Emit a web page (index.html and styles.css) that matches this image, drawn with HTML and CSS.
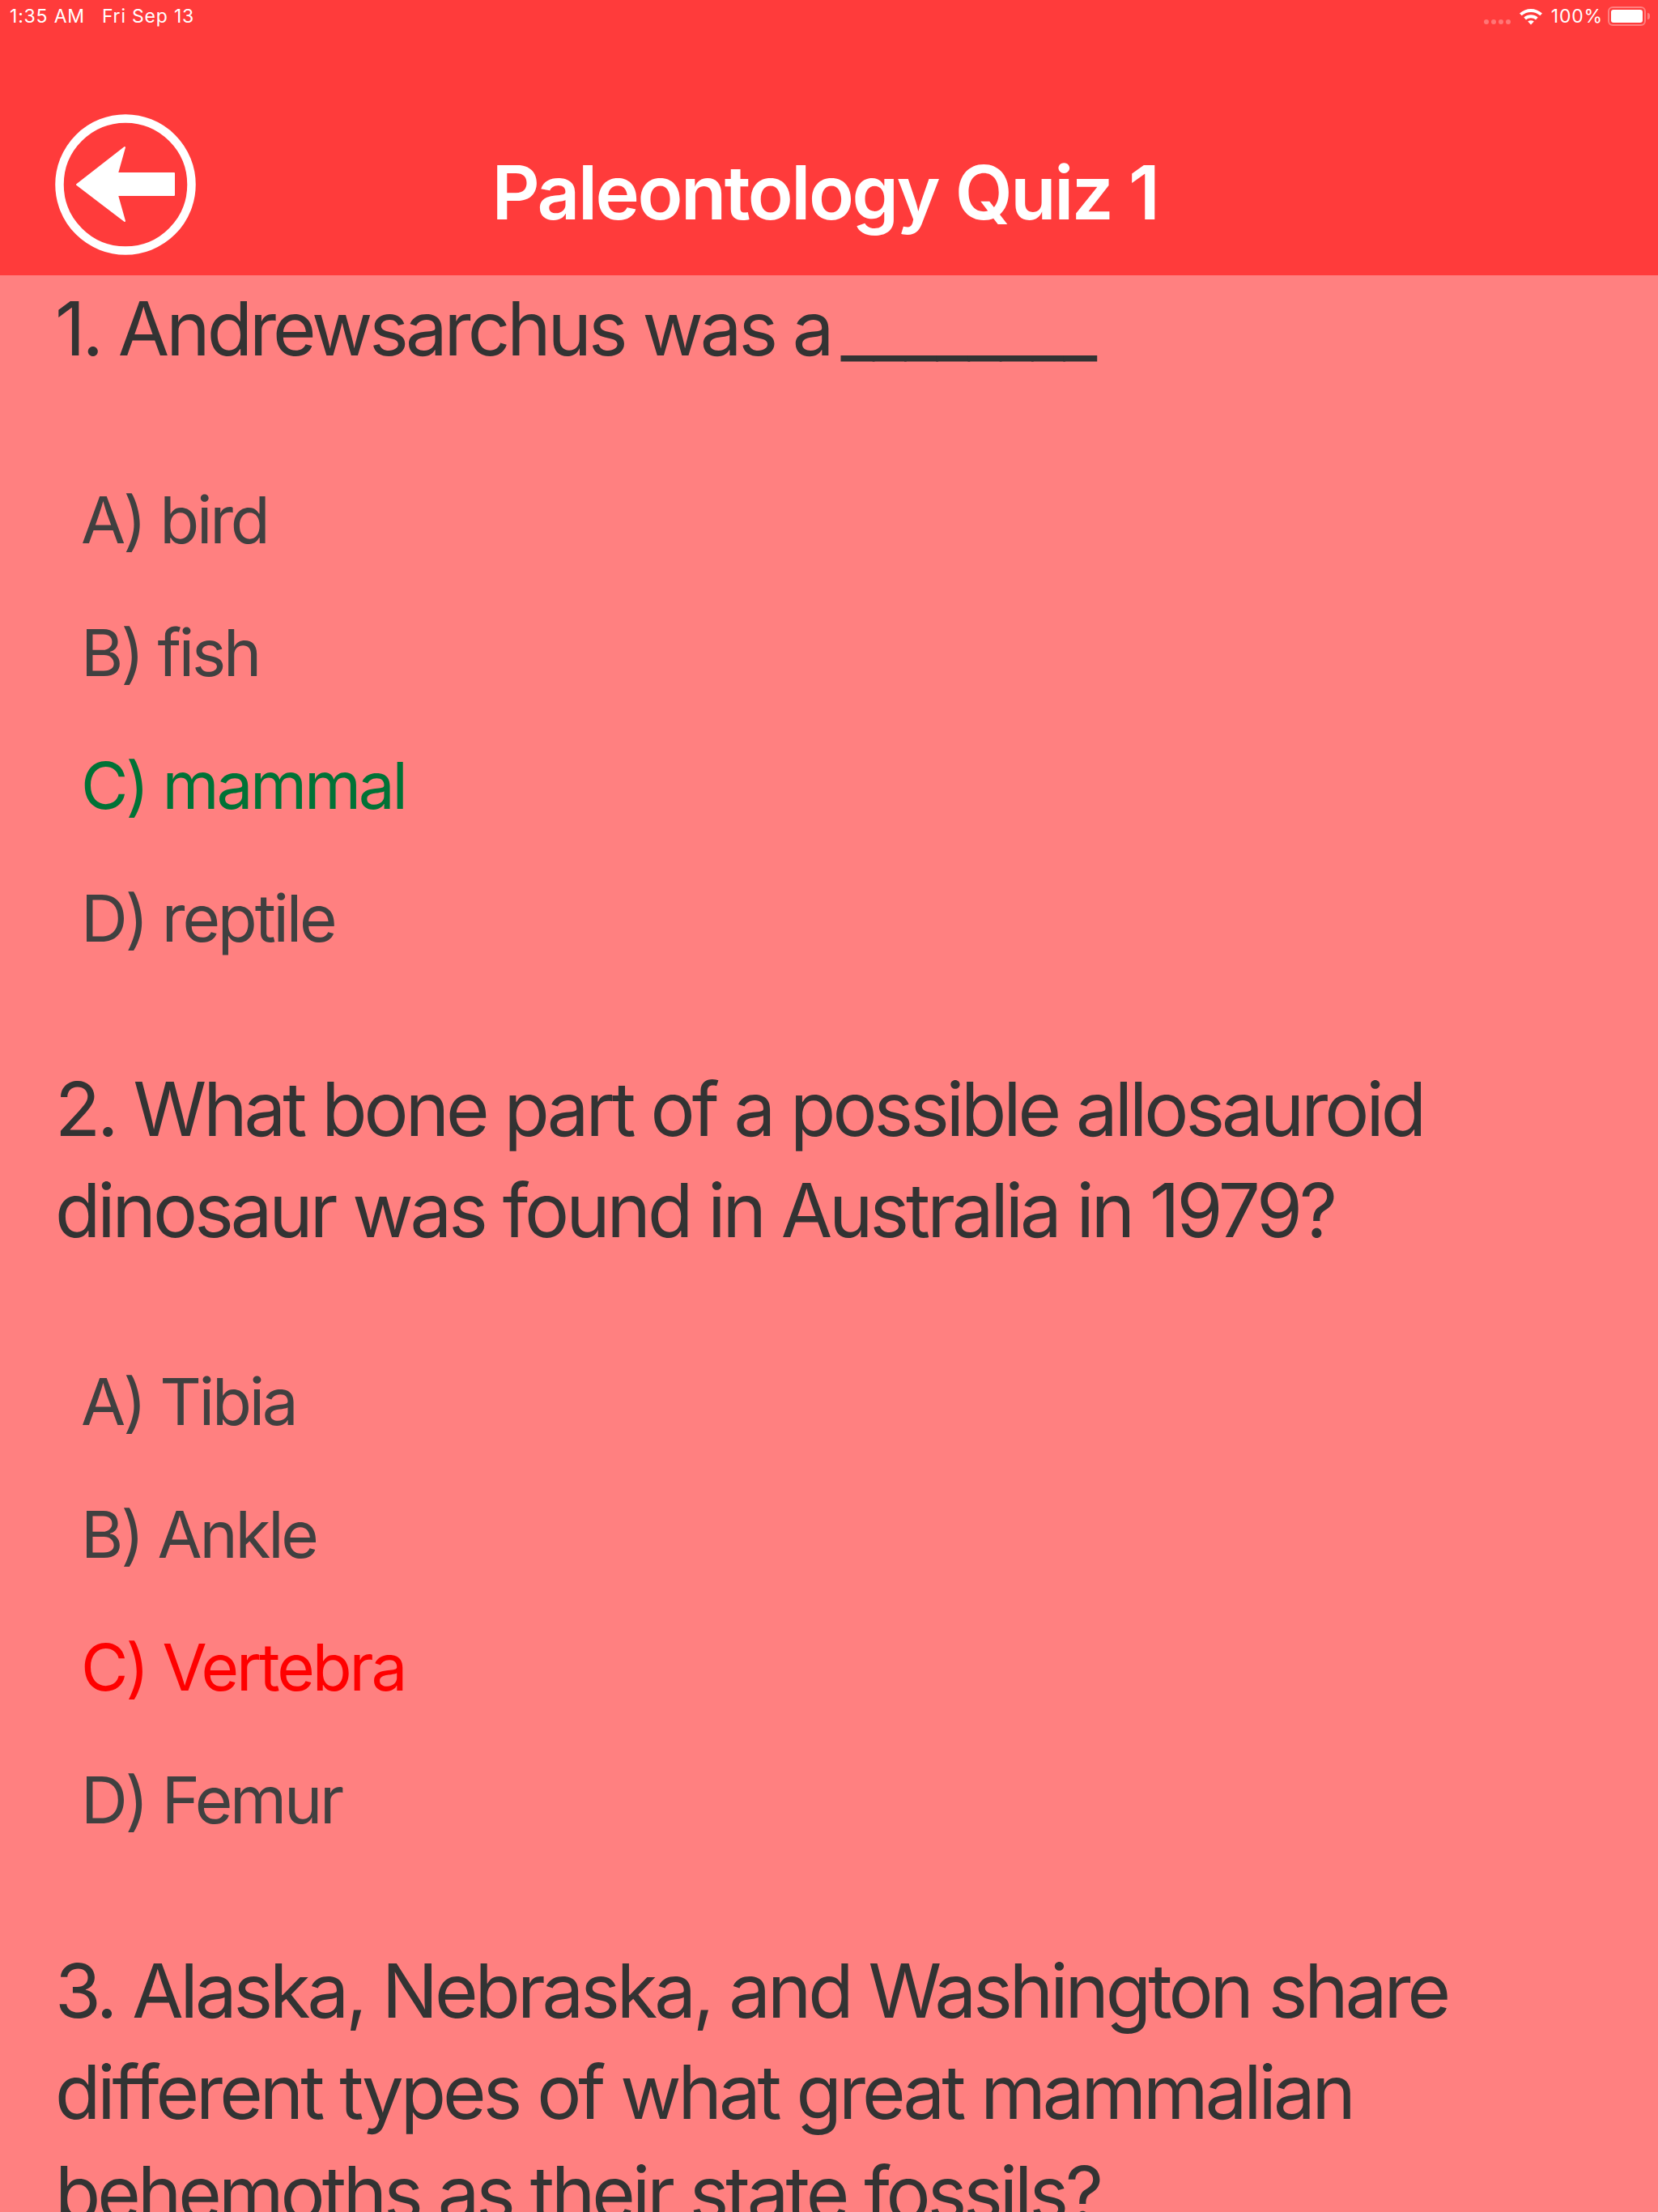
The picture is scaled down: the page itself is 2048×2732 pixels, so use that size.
FILE: index.html
```html
<!DOCTYPE html>
<html>
<head>
	<title>Paleontology Quiz 1</title>
	<link rel="stylesheet" href="styles.css">
</head>
<body>
	<div class="status-bar">
		<div class="status-left">
			<span>1:35 AM</span>
			<span>Fri Sep 13</span>
		</div>
		<div class="status-right">
			<div class="signal-dots"><i></i><i></i><i></i><i></i></div>
			<svg class="wifi" width="30" height="22" viewBox="0 0 30 22">
				<path d="M1 7.5C9 0 21 0 29 7.5L26.4 10.3C20 4.6 10 4.6 3.6 10.3Z" fill="#fff"/>
				<path d="M6.3 12.6C11.3 8.2 18.7 8.2 23.7 12.6L21 15.4C17.5 12.4 12.5 12.4 9 15.4Z" fill="#fff"/>
				<path d="M11.2 17.6C13.4 15.9 16.6 15.9 18.8 17.6L15 21.6Z" fill="#fff"/>
			</svg>
			<span class="battery-text">100%</span>
			<div class="battery"><div class="battery-fill"></div></div>
			<div class="battery-nib"></div>
		</div>
	</div>

	<div class="nav">
		<svg class="back" width="174" height="174" viewBox="0 0 174 174">
			<circle cx="87" cy="87" r="81.5" fill="none" stroke="#fff" stroke-width="10.5"/>
			<path d="M27 87L86 41L77 73H147V100H77L86 132Z" fill="#fff" stroke="#fff" stroke-width="2" stroke-linejoin="round"/>
		</svg>
		<h1 class="title">Paleontology Quiz 1</h1>
	</div>

	<div class="quiz">
		<div class="question">1. Andrewsarchus was a <span class="blank">________</span></div>
		<ul class="answers">
			<li>A) bird</li>
			<li>B) fish</li>
			<li class="right">C) mammal</li>
			<li>D) reptile</li>
		</ul>

		<div class="question">2. What bone part of a possible allosauroid dinosaur was found in Australia in 1979?</div>
		<ul class="answers">
			<li>A) Tibia</li>
			<li>B) Ankle</li>
			<li class="wrong">C) Vertebra</li>
			<li>D) Femur</li>
		</ul>

		<div class="question">3. Alaska, Nebraska, and Washington share different types of what great mammalian behemoths as their state fossils?</div>
	</div>
</body>
</html>
```

FILE: styles.css
```css
*{
	box-sizing:border-box;
}
html, body{
	height: 2732px;
	overflow: hidden;
}
body{
	margin: 0;
	background-color: #ff8080;
	font-family: "Inter", "Liberation Sans", sans-serif;
}
.status-bar{
	background-color: #ff3b3b;
	color: #fff;
	height: 40px;
	padding: 0 10px 0 12px;
	display: flex;
	justify-content: space-between;
	align-items: center;
	font-size: 23px;
	letter-spacing: 0.8px;
}
.status-left{
	display: flex;
	gap: 21px;
}
.status-right{
	display: flex;
	align-items: center;
}
.signal-dots{
	display: flex;
	gap: 3px;
	margin: 14px 10px 0 0;
}
.signal-dots i{
	width: 6px;
	height: 6px;
	border-radius: 50%;
	background-color: rgba(255,255,255,0.3);
}
.battery-text{
	margin: 0 6px 0 10px;
}
.battery{
	width: 47px;
	height: 24px;
	border: 2px solid rgba(255,255,255,0.35);
	border-radius: 6px;
	padding: 2px;
}
.battery-fill{
	background-color: #fff;
	height: 100%;
	border-radius: 3px;
}
.battery-nib{
	width: 3px;
	height: 8px;
	margin-left: 2px;
	background-color: rgba(255,255,255,0.35);
	border-radius: 0 3px 3px 0;
}
.nav{
	background-color: #ff3b3b;
	height: 300px;
	padding: 101px 0 0 68px;
	display: grid;
	grid-template-columns: 174px 1fr 252px;
	align-items: start;
}
.title{
	margin: 0;
	padding-top: 42px;
	color: #fff;
	font-size: 92px;
	font-weight: 600;
	letter-spacing: -2.5px;
	line-height: 110px;
	text-align: center;
	white-space: nowrap;
}
.quiz{
	padding: 3px 70px 0 68px;
}
.question{
	color: #333;
	font-size: 92px;
	letter-spacing: -4px;
	line-height: 125px;
}
.blank{
	letter-spacing: -2.7px;
	margin-left: -10px;
}
.answers{
	list-style-type: none;
	margin: 0;
	padding: 92px 0 91px 32px;
}
.answers li{
	color: #404040;
	font-size: 80px;
	letter-spacing: -3.2px;
	line-height: 164px;
}
.answers .right{
	color: #007236;
}
.answers .wrong{
	color: #ff0000;
}
```
